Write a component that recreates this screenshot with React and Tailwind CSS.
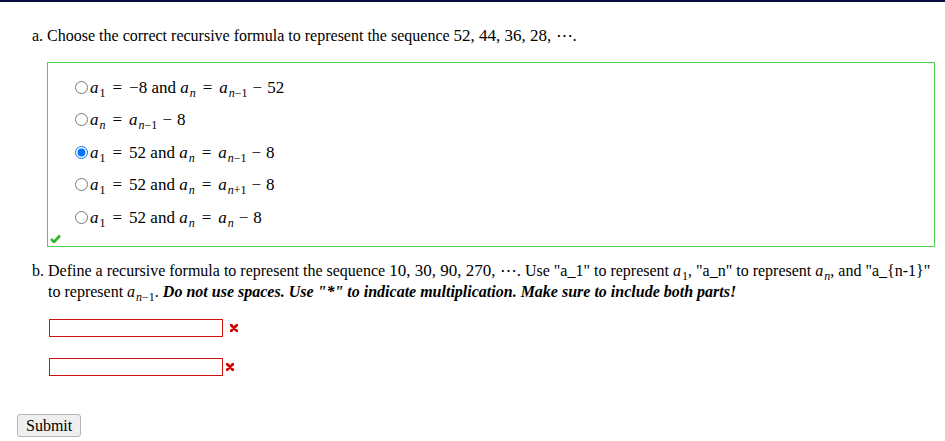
import React from "react";

const serif = "font-['Liberation_Serif',serif]";

const Sub = ({ v = "a", s }) => (
  <span className={`whitespace-nowrap ${serif}`}>
    <i>{v}</i>
    <span className="relative top-[4px] text-[12px] leading-none ml-[1px]">{s}</span>
  </span>
);

const N = ({ children }) => <i className="text-[12px] leading-none">{children}</i>;

const Eq = () => <span className="mx-[7px]">=</span>;
const Minus = () => <span className="mx-[5px]">−</span>;

const options = [
  {
    checked: false,
    body: (
      <>
        <Sub s="1" />
        <Eq />−8 and <Sub s={<N>n</N>} />
        <Eq />
        <Sub s={<><N>n</N>−1</>} />
        <Minus />52
      </>
    ),
  },
  {
    checked: false,
    body: (
      <>
        <Sub s={<N>n</N>} />
        <Eq />
        <Sub s={<><N>n</N>−1</>} />
        <Minus />8
      </>
    ),
  },
  {
    checked: true,
    body: (
      <>
        <Sub s="1" />
        <Eq />52 and <Sub s={<N>n</N>} />
        <Eq />
        <Sub s={<><N>n</N>−1</>} />
        <Minus />8
      </>
    ),
  },
  {
    checked: false,
    body: (
      <>
        <Sub s="1" />
        <Eq />52 and <Sub s={<N>n</N>} />
        <Eq />
        <Sub s={<><N>n</N>+1</>} />
        <Minus />8
      </>
    ),
  },
  {
    checked: false,
    body: (
      <>
        <Sub s="1" />
        <Eq />52 and <Sub s={<N>n</N>} />
        <Eq />
        <Sub s={<N>n</N>} />
        <Minus />8
      </>
    ),
  },
];

const RedX = () => (
  <svg width="8" height="8" viewBox="0 0 8 8" className="shrink-0">
    <path d="M1 1 L7 7 M7 1 L1 7" stroke="#d40000" strokeWidth="2.8" strokeLinecap="round" />
  </svg>
);

const App = () => {
  return (
    <div className={`min-h-[441px] bg-white text-black ${serif} text-[16px]`}>
      <div className="h-[2px] bg-[#0b0b3d]" />

      <div className="pl-[32px] pt-[22px] leading-[24px]">
        a. Choose the correct recursive formula to represent the sequence{" "}
        <span className="text-[17px]">52, 44, 36, 28, ⋯.</span>
      </div>

      <div className="ml-[47px] mr-[10px] mt-[14px] border border-[#4fd04f] pt-[8px]">
        {options.map((o, i) => (
          <label key={i} className={`flex items-center h-[32.5px] pl-[27px] text-[17px] ${serif}`}>
            <input
              type="radio"
              name="q1"
              defaultChecked={o.checked}
              className="m-0 mr-[2px] w-[13px] h-[13px]"
            />
            <span className={serif}>{o.body}</span>
          </label>
        ))}
        <div className="pl-[2px] h-[12px] leading-none">
          <svg width="11" height="9" viewBox="0 0 11 9" className="block">
            <path d="M1 5 L4 8 L10 1.5" fill="none" stroke="#2fb52f" strokeWidth="2.6" strokeLinejoin="round" />
          </svg>
        </div>
      </div>

      <div className="mt-[13px] pl-[48px] -indent-[16px] leading-[21px] whitespace-nowrap">
        <div>
          b. Define a recursive formula to represent the sequence{" "}
          <span className="text-[17px]">10, 30, 90, 270, ⋯.</span> Use "a_1" to represent{" "}
          <Sub s="1" />, "a_n" to represent <Sub s={<N>n</N>} />, and "a_{"{"}n-1{"}"}"
        </div>
        <div className="indent-0">
          to represent <Sub s={<><N>n</N>−1</>} />.{" "}
          <b>
            <i>Do not use spaces. Use "*" to indicate multiplication. Make sure to include both parts!</i>
          </b>
        </div>
      </div>

      <div className="mt-[17px] pl-[49px] flex flex-col gap-[21px]">
        <div className="flex items-center gap-[7px]">
          <input type="text" className="w-[174px] h-[18px] border border-[#cc1111] outline-none" />
          <RedX />
        </div>
        <div className="flex items-center gap-[3px]">
          <input type="text" className="w-[174px] h-[18px] border border-[#cc1111] outline-none" />
          <RedX />
        </div>
      </div>

      <div className="pl-[17px] mt-[38px]">
        <button className="h-[23px] px-[8px] bg-[#efefef] border border-[#b5b5b5] rounded-[3px] text-[16px] leading-none">
          Submit
        </button>
      </div>
    </div>
  );
};

export default App;
